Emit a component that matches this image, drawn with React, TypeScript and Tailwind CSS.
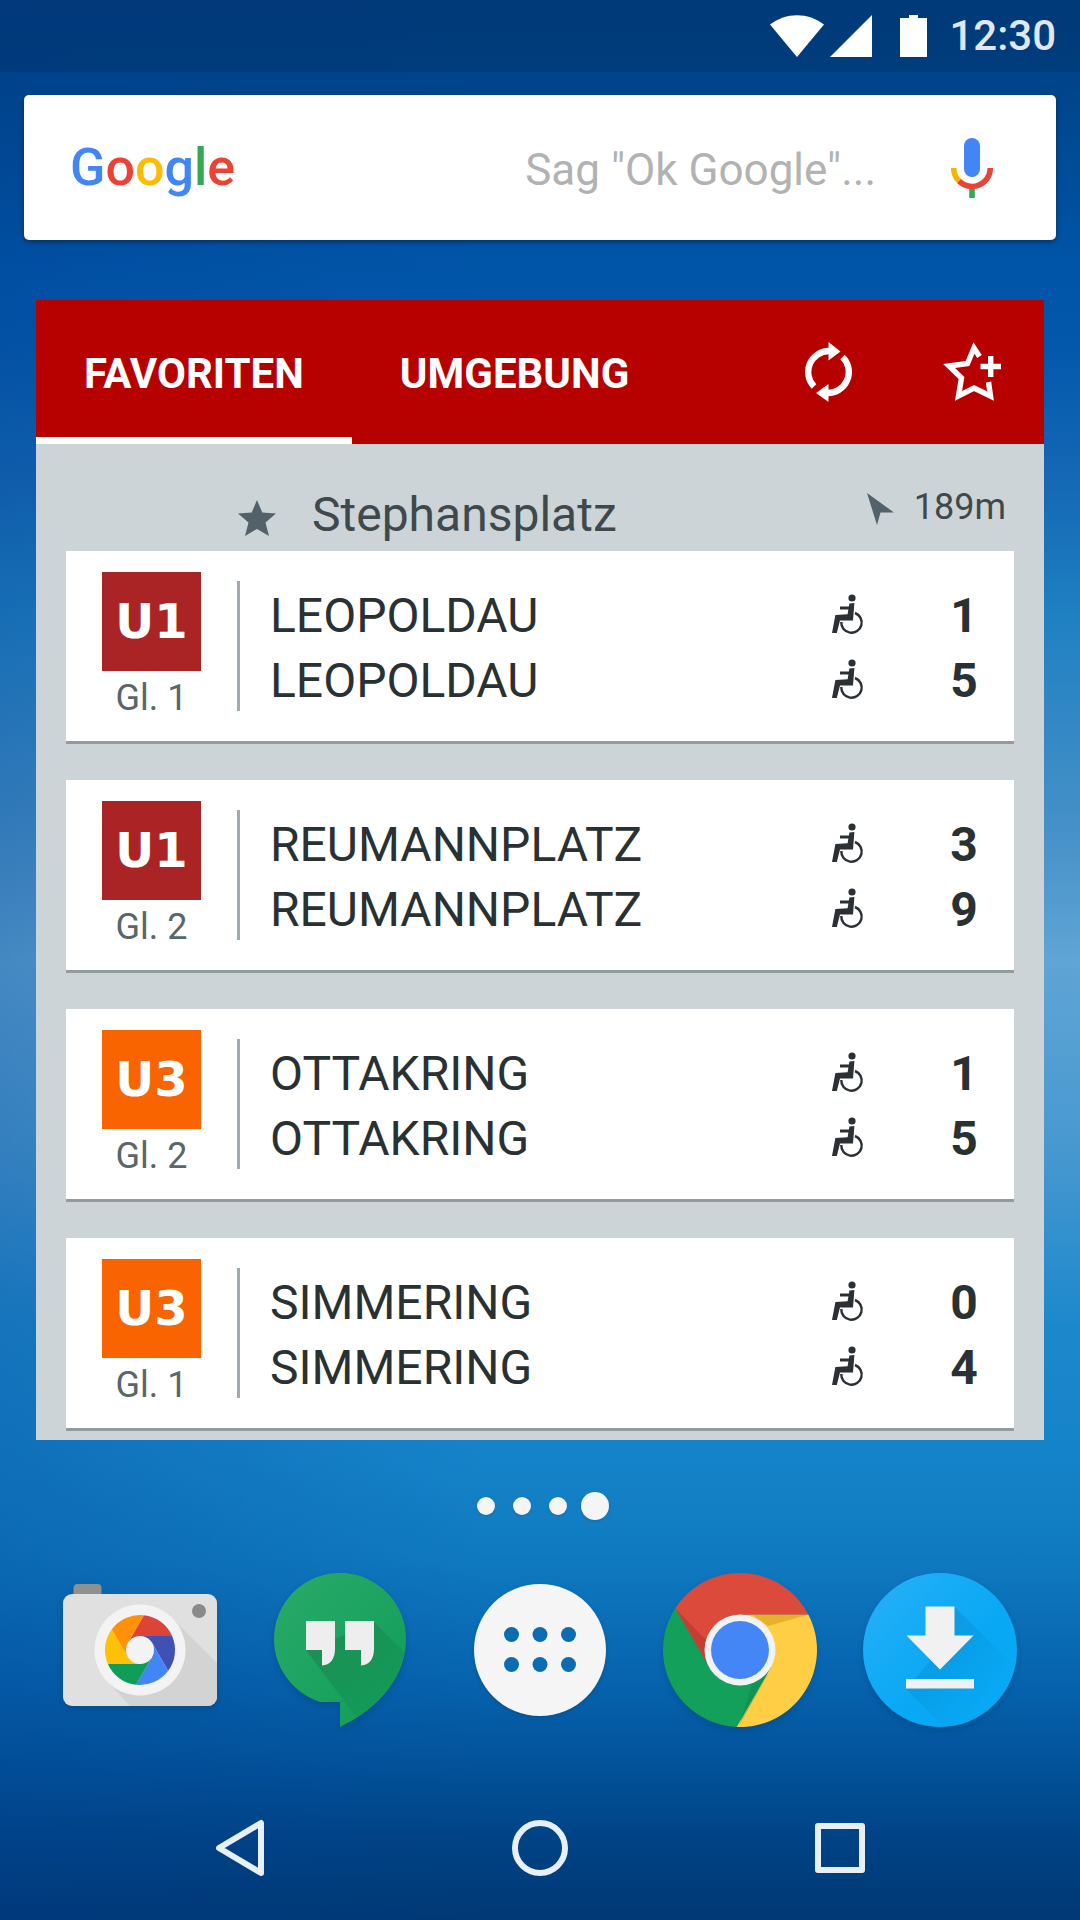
import React from "react";

const departures = [
  { line: "U1", colour: "bg-[#aa2325]", track: "Gl. 1", name: "LEOPOLDAU", minutes: [1, 5] },
  { line: "U1", colour: "bg-[#aa2325]", track: "Gl. 2", name: "REUMANNPLATZ", minutes: [3, 9] },
  { line: "U3", colour: "bg-[#fa6400]", track: "Gl. 2", name: "OTTAKRING", minutes: [1, 5] },
  { line: "U3", colour: "bg-[#fa6400]", track: "Gl. 1", name: "SIMMERING", minutes: [0, 4] },
];

const StatusBar = () => (
  <header className="flex h-[72px] items-center justify-end bg-black/10 px-6">
    <svg width="54" height="42" viewBox="0 0 54 42" fill="white">
      <path d="M0 9.5C16-3 38-3 54 9.5L27 42Z" />
    </svg>
    <svg width="42" height="42" viewBox="0 0 42 42" fill="white" className="ml-1.5">
      <path d="M42 0V42H0Z" />
    </svg>
    <svg width="27" height="42" viewBox="0 0 27 42" fill="white" className="ml-7">
      <path d="M9 0h9v3h9v39H0V3h9Z" />
    </svg>
    <time className="ml-[22px] text-[42px] leading-[48px] font-medium text-[#e0e8f5]">
      12:30
    </time>
  </header>
);

const SearchBar = () => (
  <form className="mx-6 mt-[23px] flex h-[145px] items-center rounded-[5px] bg-white pl-[46px] shadow-[0_2px_5px_rgba(0,0,0,0.4)]">
    <div className="text-[52px] leading-[60px] font-medium text-[#4285f4]">
      G<span className="text-[#ea4335]">o</span>
      <span className="text-[#fbbc05]">o</span>g
      <span className="text-[#34a853]">l</span>
      <span className="text-[#ea4335]">e</span>
    </div>
    <input
      type="text"
      aria-label="Suche"
      placeholder={'Sag "Ok Google"...'}
      className="min-w-0 flex-1 pt-1 pr-3 text-right text-[44px] leading-[60px] outline-none placeholder:text-[#b2b2b2]"
    />
    <button type="button" aria-label="Sprachsuche" className="flex w-[168px] justify-center">
      <svg width="44" height="60" viewBox="0 0 44 60" fill="none">
        <rect x="14" y="0" width="16" height="39" rx="8" fill="#4285f4" />
        <path d="M3.7 30a18.3 18.3 0 0 0 5.4 13" stroke="#f4b400" strokeWidth="5.6" />
        <path d="M9 43A18.3 18.3 0 0 0 40.3 30" stroke="#ea4335" strokeWidth="5.6" />
        <path d="M22 51v9" stroke="#34a853" strokeWidth="5.6" />
      </svg>
    </button>
  </form>
);

const Wheelchair = () => (
  <svg width="32" height="44" viewBox="0 0 32 44" fill="none" stroke="#2a3033">
    <circle cx="20" cy="4" r="3.6" fill="#2a3033" stroke="none" />
    <path d="M8 14h11" strokeWidth="3" />
    <path d="M17.4 9.5 22.4 9l-1.4 17.500H8L4.800 39H0L3.400 21l12.200-.8Z" fill="#2a3033" stroke="none" />
    <path d="M23 19A10.200 10.200 0 1 1 9.300 28" strokeWidth="2.4" />
  </svg>
);

const WidgetHeader = () => (
  <div className="flex h-36 bg-[#b70000] text-white">
    <div role="tablist" className="flex flex-1 text-[42px] leading-[48px] font-bold">
      <button role="tab" aria-selected="true" className="border-b-[7px] border-white px-12 pt-[11px]">
        FAVORITEN
      </button>
      <button role="tab" aria-selected="false" className="px-12 pt-1">
        UMGEBUNG
      </button>
    </div>
    <button aria-label="Aktualisieren" className="flex w-36 items-center justify-center">
      <svg width="48" height="60" viewBox="0 0 48 60" fill="none" stroke="white" strokeWidth="6.4">
        <path d="M25 9A21 21 0 0 0 10 44.500M23 51A21 21 0 0 0 38.500 15" />
        <path d="M24.500 0 36.500 9.500 24.500 18.500ZM24.500 42V60L12 51Z" fill="white" stroke="none" />
      </svg>
    </button>
    <button aria-label="Favorit hinzufügen" className="flex w-36 items-center justify-center">
      <svg width="58" height="60" viewBox="0 0 58 60" fill="none" stroke="white" strokeWidth="5.400">
        <path d="M36.500 14.500 31 6 24.500 21.500 6 24 18.500 36 15.500 54 31 46 47.500 54 45.500 40" />
        <path d="M37.500 24.500H58M47.700 14V35" />
      </svg>
    </button>
  </div>
);

const Station = () => (
  <div className="flex items-start pt-[43px] pr-2 pb-2 text-[#3f494c]">
    <svg width="38" height="42" viewBox="0 0 38 42" fill="#53626a" className="ml-[172px] self-center">
      <path d="M19 6 24.300 18.500 38 19.500 27.500 28.500 31 42 19 35 7 42 10.500 28.500 0 19.500 13.700 18.500Z" />
    </svg>
    <h1 className="ml-9 text-[48px] leading-[56px]">Stephansplatz</h1>
    <svg width="27" height="40" viewBox="0 0 27 40" fill="#53626a" className="ml-auto">
      <path d="M0 6 27 25.500 13.500 25.500 10 38Z" />
    </svg>
    <span className="ml-5 text-[36px] leading-[40px]">189m</span>
  </div>
);

const CameraIcon = () => (
  <svg width="160" height="160" viewBox="-80 -80 160 160" className="drop-shadow-md">
    <rect x="-66.500" y="-66" width="28" height="20" rx="4" fill="#8f9090" />
    <rect x="-77" y="-56" width="154" height="112" rx="9" fill="#e0e0e0" />
    <path d="M32-32 77 13V47a9 9 0 0 1-9 9H-10L-32 32Z" fill="#d3d3d3" />
    <circle cx="59" cy="-39" r="7" fill="#8a8a8a" />
    <circle r="45.500" fill="#f3f3f3" />
    {["#db4437", "#3f51b5", "#4285f4", "#0f9d58", "#ffc107", "#ff9009"].map(
      (fill, index) => (
        <path
          key={fill}
          fill={fill}
          transform={`rotate(${index * 60})`}
          d="M0-14 32.100-14A35 35 0 0 0 3.900-34.800L-12.100-7Z"
        />
      )
    )}
    <circle r="14" fill="#f3f3f3" />
  </svg>
);

const HangoutsIcon = () => (
  <svg width="160" height="160" viewBox="-80 -69 160 160" className="drop-shadow-md">
    <defs>
      <linearGradient id="bubble" x1="0" y1="0" x2="1" y2="1">
        <stop offset="0" stopColor="#2aaa68" />
        <stop offset="1" stopColor="#0f9d58" />
      </linearGradient>
      <linearGradient id="bubbleShadow" x1="0" y1="0" x2="1" y2="1">
        <stop offset="0" stopColor="#000" stopOpacity="0.16" />
        <stop offset="1" stopColor="#000" stopOpacity="0" />
      </linearGradient>
    </defs>
    <path d="M0 63-20 62.900A66 66 0 1 1 66 0C66 35 42 68 0 88Z" fill="url(#bubble)" />
    <path d="M34-17 64 13C58 45 36 66 16 78L-34 11-5 0Z" fill="url(#bubbleShadow)" />
    <path
      d="M-34-18H-5V10C-5 19-9 26-18 26.500V11H-34ZM5-18H34V10C34 19 30 26 21 26.500V11H5Z"
      fill="#eee"
    />
  </svg>
);

const AppsIcon = () => (
  <svg width="160" height="160" viewBox="-80 -80 160 160" className="drop-shadow-sm">
    <circle r="66" fill="#f5f5f5" />
    {[-28.5, 0, 28.5].map((x) => (
      <g key={x} fill="#0c6cb1">
        <circle cx={x} cy="-15.500" r="7.500" />
        <circle cx={x} cy="14.500" r="7.500" />
      </g>
    ))}
  </svg>
);

const ChromeIcon = () => (
  <svg width="160" height="160" viewBox="-80 -80 160 160" className="drop-shadow-md">
    {["#db4a3a", "#ffce44", "#12a05b"].map((fill, index) => (
      <path
        key={fill}
        fill={fill}
        transform={`rotate(${index * 120})`}
        d="M0-35.300 68.400-35.300A77 77 0 0 0-64.800-41.600L-30.600 17.600Z"
      />
    ))}
    <path d="M12-35.300H68L28-24Z" fill="#d99f1c" fillOpacity="0.6" />
    <path d="M-64-41-34 10-32-8Z" fill="#a52b22" fillOpacity="0.4" />
    <path d="M-1 76 28 24 12 34Z" fill="#0b7d42" fillOpacity="0.3" />
    <circle r="35.500" fill="#f3f3f3" />
    <circle r="29" fill="#4486f5" />
  </svg>
);

const DownloadIcon = () => (
  <svg width="160" height="160" viewBox="-80 -80 160 160" className="drop-shadow-md">
    <defs>
      <linearGradient id="disc" x1="0" y1="0" x2="1" y2="1">
        <stop offset="0" stopColor="#29b0f8" />
        <stop offset="0.600" stopColor="#08a8f4" />
      </linearGradient>
      <linearGradient id="discShadow" x1="0" y1="0" x2="1" y2="1">
        <stop offset="0.200" stopColor="#024a80" stopOpacity="0.18" />
        <stop offset="0.750" stopColor="#024a80" stopOpacity="0" />
      </linearGradient>
    </defs>
    <circle r="77" fill="url(#disc)" />
    <path d="M15-43 74 16A77 77 0 0 1 3 76L-34 39 0 0Z" fill="url(#discShadow)" />
    <path d="M-14.500-43.500H14.500V-14.500H33.500L0 19.500-33.500-14.500H-14.500ZM-34 29H34V38.500H-34Z" fill="#f1f1f1" />
  </svg>
);

const apps = [
  { name: "Kamera", Icon: CameraIcon },
  { name: "Hangouts", Icon: HangoutsIcon },
  { name: "Apps", Icon: AppsIcon },
  { name: "Chrome", Icon: ChromeIcon },
  { name: "Downloads", Icon: DownloadIcon },
];

export default function App() {
  return (
    <div className="flex min-h-screen flex-col bg-[linear-gradient(90deg,rgba(0,62,145,0.28),transparent_45%),linear-gradient(180deg,#004086_0%,#00468c_5%,#0055a8_14%,#0458ab_18%,#1468b5_25%,#1f80c2_32%,#4590c8_43%,#5fa5d5_50%,#4798d0_60%,#1c88cc_69%,#1583c9_76%,#0f7ac0_81%,#0765b0_87%,#02529a_92%,#004284_96%,#003874_100%)] font-[Roboto,sans-serif]">
      <StatusBar />
      <SearchBar />

      <main className="mx-9 mt-[60px] bg-[#ccd4d7]">
        <WidgetHeader />
        <div className="px-[30px] pb-[9px]">
          <Station />
          <ul className="flex flex-col gap-9">
            {departures.map((departure) => (
              <li
                key={departure.line + departure.track}
                className="flex h-[193px] items-start border-b-[3px] border-[#949b9d] bg-white px-9"
              >
                <div className="mt-[21px] w-[99px] text-center">
                  <div
                    className={`${departure.colour} font-["DejaVu_Sans",sans-serif] text-[48px] leading-[99px] font-bold text-white`}
                  >
                    {departure.line}
                  </div>
                  <div className="mt-[7px] text-[36px] leading-[40px] text-[#5a666b]">
                    {departure.track}
                  </div>
                </div>
                <div className="mt-[30px] ml-9 h-[130px] w-[3px] bg-[#9fabb0]" />
                <div className="mt-8 ml-[30px] flex-1 text-[48px] leading-[65px] text-[#2a3133]">
                  {departure.minutes.map((minute) => (
                    <div key={minute} className="flex items-center">
                      <span className="flex-1">{departure.name}</span>
                      <Wheelchair />
                      <span className="ml-[86px] w-7 text-center font-bold">
                        {minute}
                      </span>
                    </div>
                  ))}
                </div>
              </li>
            ))}
          </ul>
        </div>
      </main>

      <div className="mt-[52px] flex h-7 items-center justify-center gap-[18px] pl-1.5">
        <span className="size-[18px] rounded-full bg-[#f5f5f5] shadow" />
        <span className="size-[18px] rounded-full bg-[#f5f5f5] shadow" />
        <span className="size-[18px] rounded-full bg-[#f5f5f5] shadow" />
        <span className="-ml-1 size-7 rounded-full bg-[#f5f5f5] shadow" />
      </div>

      <div className="mt-[50px] grid grid-cols-5 px-10">
        {apps.map(({ name, Icon }) => (
          <button key={name} aria-label={name} className="flex justify-center">
            <Icon />
          </button>
        ))}
      </div>

      <nav className="mt-auto grid h-36 grid-cols-3 px-[90px]">
        <button aria-label="Zurück" className="flex items-center justify-center">
          <svg width="60" height="60" viewBox="0 0 60 60" fill="none" stroke="#e8eff7" strokeWidth="6" strokeLinejoin="round">
            <path d="M51 5V55L9 30Z" />
          </svg>
        </button>
        <button aria-label="Startseite" className="flex items-center justify-center">
          <svg width="60" height="60" viewBox="0 0 60 60" fill="none" stroke="#e8eff7" strokeWidth="6">
            <circle cx="30" cy="30" r="25" />
          </svg>
        </button>
        <button aria-label="Übersicht" className="flex items-center justify-center">
          <svg width="60" height="60" viewBox="0 0 60 60" fill="none" stroke="#e8eff7" strokeWidth="6" strokeLinejoin="round">
            <rect x="8" y="8" width="44" height="44" />
          </svg>
        </button>
      </nav>
    </div>
  );
}
